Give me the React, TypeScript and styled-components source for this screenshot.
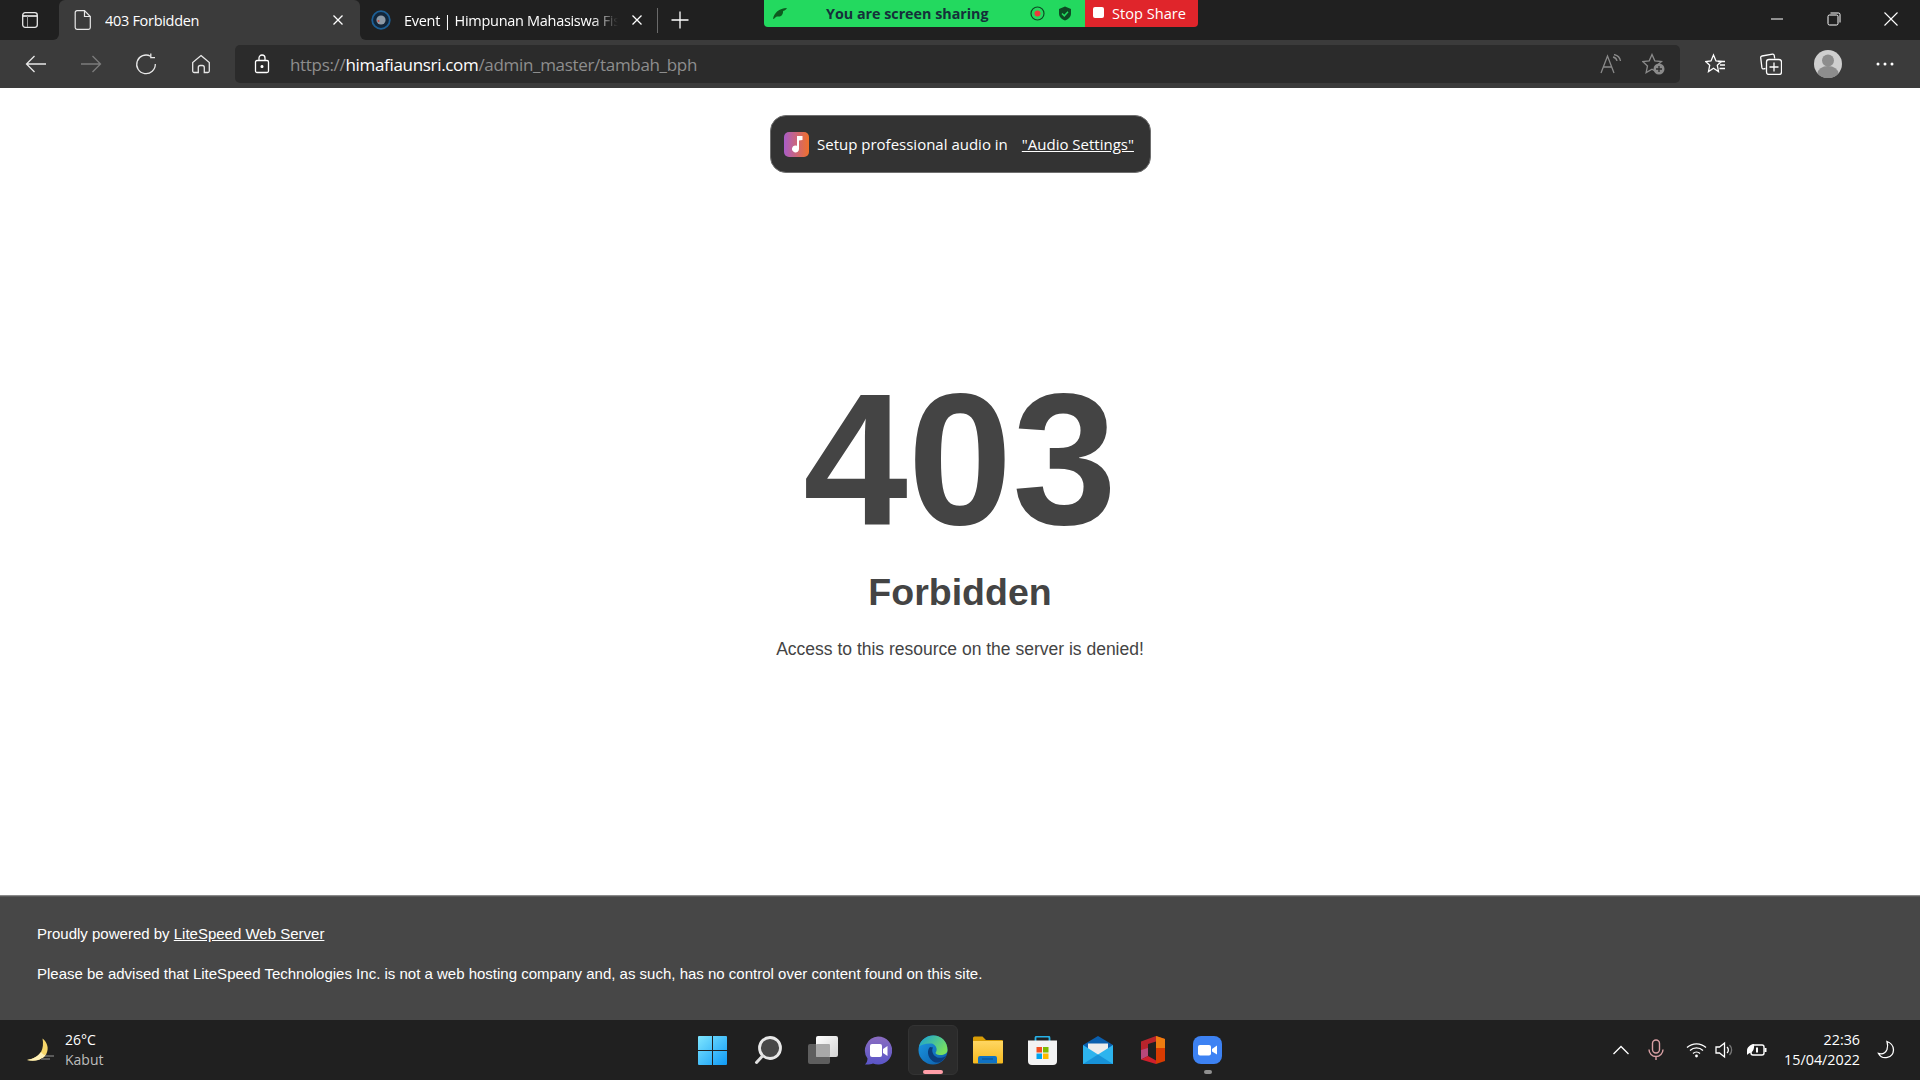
import styled, { createGlobalStyle } from "styled-components"

const uiFont = `"Open Sans", "Noto Sans", sans-serif`
const pageFont = `"Liberation Sans", Arial, sans-serif`

const Global = createGlobalStyle`
  html, body { margin: 0; padding: 0; background: #fff; }
  * { box-sizing: border-box; }
`

const Screen = styled.div`
  width: 1920px;
  height: 1080px;
  position: relative;
  overflow: hidden;
  display: flex;
  flex-direction: column;
  font-family: ${uiFont};
`

const TabStrip = styled.div`
  height: 40px;
  background: linear-gradient(#202020 50%, #3b3b3b 50%);
  display: flex;
  align-items: stretch;
  flex: none;
`

const SidebarButton = styled.div`
  width: 59px;
  background: #202020;
  border-radius: 0 0 6px 0;
  display: flex;
  align-items: center;
  justify-content: center;
`

const Tab = styled.div<{ $active?: boolean }>`
  width: ${p => (p.$active ? "301px" : "292px")};
  height: 40px;
  background: ${p => (p.$active ? "#3b3b3b" : "#202020")};
  border-radius: ${p => (p.$active ? "6px 6px 0 0" : "0 0 0 6px")};
  display: flex;
  align-items: center;
  padding: 0 ${p => (p.$active ? "16px 0 15px" : "9px 0 11px")};
  gap: 13px;
  color: #fff;
  flex: none;
`

const TabTitle = styled.span<{ $fade?: boolean }>`
  flex: 1;
  font-size: 14.5px;
  letter-spacing: -0.3px;
  white-space: nowrap;
  overflow: hidden;
  ${p => p.$fade && `
    -webkit-mask-image: linear-gradient(to right, #000 88%, transparent);
    mask-image: linear-gradient(to right, #000 88%, transparent);
  `}
`

const StripRest = styled.div`
  flex: 1;
  background: #202020;
  display: flex;
  align-items: stretch;
`

const TabDivider = styled.div`
  width: 1px;
  height: 25px;
  background: #6a6a6a;
  align-self: center;
  margin-left: 5px;
  margin-top: 1px;
`

const NewTab = styled.div`
  width: 43px;
  display: flex;
  align-items: center;
  justify-content: center;
`

const WindowControls = styled.div`
  margin-left: auto;
  display: flex;
  padding-right: 1px;
`

const WindowButton = styled.div`
  width: 57px;
  display: flex;
  align-items: center;
  justify-content: center;
  padding-bottom: 2px;
`

const Toolbar = styled.div`
  height: 48px;
  flex: none;
  background: #3b3b3b;
  display: flex;
  align-items: center;
  padding: 0 0 0 8px;
`

const NavButton = styled.div`
  width: 55px;
  display: flex;
  align-items: center;
  justify-content: center;
`

const AddressBar = styled.div`
  width: 1445px;
  height: 38px;
  margin: 0 8px 0 7px;
  background: #2b2b2b;
  border-radius: 5px;
  display: flex;
  align-items: center;
  padding: 0 14px 0 19px;
  flex: none;
`

const Url = styled.div`
  margin-left: 20px;
  font-size: 17px;
  letter-spacing: -0.32px;
  color: #8e8e8e;
  flex: 1;
  white-space: nowrap;
`

const Host = styled.span`
  color: #fff;
`

const AddressIcons = styled.div`
  display: flex;
  align-items: center;
  gap: 20px;
`

const ToolButton = styled.div<{ $w: number }>`
  width: ${p => p.$w}px;
  display: flex;
  align-items: center;
  justify-content: center;
`

const Content = styled.main`
  flex: 1;
  background: #fff;
  color: #444;
  font-family: ${pageFont};
  text-align: center;
  padding-top: 277px;
  border-bottom: 1px solid #8a8a8a;
`

const Code = styled.div`
  font-size: 188px;
  line-height: 188px;
  font-weight: 700;
  margin-bottom: 17px;
`

const Title = styled.h1`
  font-size: 37.5px;
  line-height: 44px;
  font-weight: 700;
  margin: 0;
`

const Description = styled.p`
  font-size: 17.5px;
  line-height: 22px;
  margin: 24px 0 0;
`

const Footer = styled.footer`
  height: 124px;
  flex: none;
  background: #474747;
  color: #fff;
  font-family: ${pageFont};
  font-size: 15px;
  padding: 28px 37px 0;
  border-top: 1px solid #5a5a5a;
`

const FooterLine = styled.p`
  margin: 0 0 23px;
  line-height: 17px;
`

const FooterLink = styled.a`
  color: #fff;
  text-decoration: underline;
`

const Taskbar = styled.div`
  height: 60px;
  flex: none;
  background: #202020;
  display: flex;
  align-items: center;
  color: #fff;
`

const Weather = styled.div`
  width: 685px;
  display: flex;
  align-items: center;
  padding-left: 26px;
  gap: 10px;
  flex: none;
`

const WeatherText = styled.div`
  font-size: 14px;
  line-height: 20px;
`

const WeatherState = styled.div`
  color: #bdbdbd;
`

const TaskApps = styled.div`
  display: flex;
  align-items: center;
`

const TaskApp = styled.div<{ $active?: boolean }>`
  width: 55px;
  height: 50px;
  position: relative;
  display: flex;
  align-items: center;
  justify-content: center;
  &::before {
    content: "";
    display: ${p => (p.$active ? "block" : "none")};
    position: absolute;
    inset: 0 2.5px;
    background: #2b2b2b;
    border: 1px solid #333;
    border-radius: 6px;
  }
  & > svg {
    position: relative;
  }
`

const RunDot = styled.span<{ $active?: boolean }>`
  position: absolute;
  bottom: 1px;
  left: 50%;
  transform: translateX(-50%);
  height: 4px;
  border-radius: 2px;
  width: ${p => (p.$active ? "20px" : "8px")};
  background: ${p => (p.$active ? "#ff9ea8" : "#8f8f8f")};
`

const Tray = styled.div`
  margin-left: auto;
  display: flex;
  align-items: center;
  padding-right: 22px;
`

const TraySlot = styled.div<{ $w: number }>`
  width: ${p => p.$w}px;
  display: flex;
  align-items: center;
  justify-content: center;
`

const Clock = styled.div`
  width: 84px;
  text-align: right;
  font-size: 14.3px;
  line-height: 20px;
  margin-right: 14px;
  white-space: nowrap;
`

const ShareBar = styled.div`
  position: absolute;
  top: 0;
  left: 764px;
  width: 434px;
  height: 27px;
  border-radius: 0 0 4px 4px;
  overflow: hidden;
  display: flex;
`

const ShareStatus = styled.div`
  width: 321px;
  background: #23d95f;
  display: flex;
  align-items: center;
  padding-left: 8px;
`

const ShareLabel = styled.span`
  margin-left: 38px;
  font-size: 14.3px;
  font-weight: 700;
  color: #15303a;
  white-space: nowrap;
  flex: 1;
`

const ShareIcons = styled.div`
  display: flex;
  align-items: center;
  gap: 13px;
  padding-right: 13px;
`

const StopButton = styled.div`
  flex: 1;
  background: #e0252b;
  color: #fff;
  font-size: 14.6px;
  display: flex;
  align-items: center;
  gap: 8px;
  padding-left: 8px;
  padding-bottom: 2px;
`

const StopSquare = styled.span`
  width: 11px;
  height: 11px;
  background: #fff;
  border-radius: 2px;
`

const AudioToast = styled.div`
  position: absolute;
  top: 115px;
  left: 770px;
  width: 381px;
  height: 58px;
  background: #333;
  border: 1px solid #6f6f6f;
  border-radius: 16px;
  color: #fff;
  display: flex;
  align-items: center;
  padding-left: 13px;
  font-size: 15px;
`

const AudioBadge = styled.div`
  width: 25px;
  height: 25px;
  border-radius: 5px;
  background: linear-gradient(90deg, #a85cc8, #f0702a);
  display: flex;
  align-items: center;
  justify-content: center;
  margin-right: 8px;
  flex: none;
`

const AudioLink = styled.a`
  color: #fff;
  text-decoration: underline;
  margin-left: 14px;
  white-space: nowrap;
`

const AudioText = styled.span`
  white-space: nowrap;
`

const line = { fill: "none", stroke: "#fff", strokeWidth: 1.3 }
const dim = { fill: "none", stroke: "#8a8a8a", strokeWidth: 1.3 }

const App = () => {
  return (
    <Screen>
      <Global />
      <TabStrip>
        <SidebarButton>
          <svg width="18" height="18" viewBox="0 0 18 18">
            <rect x="1.7" y="1.7" width="14.600" height="14.600" rx="2.500" fill="none" stroke="#e8e8e8" strokeWidth="1.300" />
            <path d="M2 5h14" stroke="#fff" strokeWidth="1.500" />
            <path d="M6.500 5v11" stroke="#9a9a9a" strokeWidth="1" />
          </svg>
        </SidebarButton>
        <Tab $active>
          <svg width="18" height="20" viewBox="0 0 18 20" fill="none" stroke="#e8e8e8" strokeWidth="1.200">
            <path d="M3 .7h7.500L16.300 6.500V17.500a1.800 1.800 0 0 1-1.800 1.800H3a1.800 1.800 0 0 1-1.800-1.800V2.500A1.800 1.800 0 0 1 3 .7z" />
            <path d="M10.500 .7V6.500h5.800" />
          </svg>
          <TabTitle>403 Forbidden</TabTitle>
          <svg width="12" height="12" viewBox="0 0 12 12" {...line}>
            <path d="M1.500 1.500l9 9M10.500 1.500l-9 9" />
          </svg>
        </Tab>
        <Tab>
          <svg width="20" height="20" viewBox="0 0 20 20">
            <circle cx="10" cy="10" r="8.800" fill="#12263a" stroke="#1d5f95" strokeWidth="1.800" />
            <circle cx="10" cy="10" r="4.600" fill="#8d9aa6" />
            <circle cx="7.500" cy="11" r="1" fill="#c64a3f" />
          </svg>
          <TabTitle $fade>Event | Himpunan Mahasiswa Fisika</TabTitle>
          <svg width="12" height="12" viewBox="0 0 12 12" {...line}>
            <path d="M1.500 1.500l9 9M10.500 1.500l-9 9" />
          </svg>
        </Tab>
        <StripRest>
          <TabDivider />
          <NewTab>
            <svg width="18" height="18" viewBox="0 0 18 18" {...line}>
              <path d="M9 .5v17M.5 9h17" />
            </svg>
          </NewTab>
          <WindowControls>
            <WindowButton>
              <svg width="14" height="14" viewBox="0 0 14 14" {...line} strokeWidth={1}>
                <path d="M1 7h12" />
              </svg>
            </WindowButton>
            <WindowButton>
              <svg width="14" height="14" viewBox="0 0 14 14" {...line} strokeWidth={1}>
                <rect x="1" y="3" width="10" height="10" rx="1.500" />
                <path d="M3.500 1H11.500a1.500 1.500 0 0 1 1.500 1.500V10.500" />
              </svg>
            </WindowButton>
            <WindowButton>
              <svg width="14" height="14" viewBox="0 0 14 14" {...line} strokeWidth={1.100}>
                <path d="M.5 .5l13 13M13.500 .5l-13 13" />
              </svg>
            </WindowButton>
          </WindowControls>
        </StripRest>
      </TabStrip>

      <Toolbar>
        <NavButton>
          <svg width="22" height="20" viewBox="0 0 22 20" fill="none" stroke="#e8e8e8" strokeWidth="1.300">
            <path d="M21 10H1.500M9.500 2l-8 8 8 8" />
          </svg>
        </NavButton>
        <NavButton>
          <svg width="22" height="20" viewBox="0 0 22 20" fill="none" stroke="#7c7c7c" strokeWidth="1.300">
            <path d="M1 10h19.500M12.500 2l8 8-8 8" />
          </svg>
        </NavButton>
        <NavButton>
          <svg width="22" height="22" viewBox="0 0 22 22" fill="none" stroke="#e8e8e8" strokeWidth="1.300">
            <path d="M15.500 3.200A9.300 9.300 0 1 0 20.300 11" />
            <path d="M15.800 .5v4.200h4.200" />
          </svg>
        </NavButton>
        <NavButton>
          <svg width="20" height="20" viewBox="0 0 20 20" fill="none" stroke="#e8e8e8" strokeWidth="1.300">
            <path d="M10 1.500l8.300 7V17a1.500 1.500 0 0 1-1.500 1.500h-3.500v-5a2 2 0 0 0-2-2H9.300a2 2 0 0 0-2 2v5H3.200A1.500 1.500 0 0 1 1.700 17V8.500z" />
          </svg>
        </NavButton>
        <AddressBar>
          <svg width="16" height="20" viewBox="0 0 16 20" {...line}>
            <rect x="1.500" y="6.500" width="13" height="12" rx="1.500" />
            <path d="M5 6.500V4a3 3 0 0 1 6 0v2.500" />
            <circle cx="8" cy="12.500" r="0.900" fill="#fff" />
          </svg>
          <Url>
            https://<Host>himafiaunsri.com</Host>/admin_master/tambah_bph
          </Url>
          <AddressIcons>
            <svg width="22" height="20" viewBox="0 0 22 20" {...dim}>
              <path d="M1 19L7.500 2 14 19M3.500 13h8" />
              <path d="M13 3a5 5 0 0 1 4 4M14 .5a8 8 0 0 1 6.500 6.500" />
            </svg>
            <svg width="24" height="22" viewBox="0 0 24 22">
              <path d="M10 1.500l2.800 6.300 6.700.7-5 4.500 1.400 6.600-5.900-3.400L4.100 19.600 5.500 13 .7 8.500l6.500-.7z" {...dim} />
              <circle cx="17" cy="16" r="5.500" fill="#8a8a8a" />
              <path d="M17 13v6M14 16h6" stroke="#2b2b2b" strokeWidth="1.300" />
            </svg>
          </AddressIcons>
        </AddressBar>
        <ToolButton $w={55}>
          <svg width="22" height="22" viewBox="0 0 22 22" {...line}>
            <path d="M8.500 2l2.500 6 5.500.5-4.200 3.800 1.200 6.200-5-3.300-5 3.300 1.200-6.200L.8 8.500 6 8z" />
            <path d="M13 8.500h7M15 12h5M14.500 15.500h5.500" />
          </svg>
        </ToolButton>
        <ToolButton $w={55}>
          <svg width="22" height="22" viewBox="0 0 22 22" {...line}>
            <path d="M5.500 15.500l-1.800.4a1.500 1.500 0 0 1-1.800-1.200L.7 4.700A1.500 1.500 0 0 1 2 3L12.500 1.200a1.500 1.500 0 0 1 1.700 1.200l.5 3.100" />
            <rect x="6.500" y="6.500" width="15" height="15" rx="2.500" />
            <path d="M14 9.500v9M9.500 14h9" />
          </svg>
        </ToolButton>
        <ToolButton $w={59}>
          <svg width="28" height="28" viewBox="0 0 28 28">
            <circle cx="14" cy="14" r="14" fill="#cfcfcf" />
            <circle cx="14" cy="10.500" r="6" fill="#8d8d8d" />
            <path d="M3.500 23.500a10.500 7.500 0 0 1 21 0A14 14 0 0 1 3.500 23.500z" fill="#8d8d8d" />
          </svg>
        </ToolButton>
        <ToolButton $w={56}>
          <svg width="18" height="4" viewBox="0 0 18 4" fill="#fff">
            <circle cx="2" cy="2" r="1.500" />
            <circle cx="9" cy="2" r="1.500" />
            <circle cx="16" cy="2" r="1.500" />
          </svg>
        </ToolButton>
      </Toolbar>

      <Content>
        <Code>403</Code>
        <Title>Forbidden</Title>
        <Description>Access to this resource on the server is denied!</Description>
      </Content>

      <Footer>
        <FooterLine>
          Proudly powered by <FooterLink href="#">LiteSpeed Web Server</FooterLink>
        </FooterLine>
        <FooterLine>
          Please be advised that LiteSpeed Technologies Inc. is not a web hosting company and, as such, has no control over content found on this site.
        </FooterLine>
      </Footer>

      <Taskbar>
        <Weather>
          <svg width="29" height="25" viewBox="0 0 29 25">
            <path d="M16.500 .5c5 4 6.500 10 4 15-2.500 5-9 8.500-19.500 6.500 6-1 11-3.500 14-8 2-3.500 2.500-9 1.500-13.500z" fill="#f6d66a" />
            <path d="M1 22c6-1 11-3.500 14-8 2 2.500 3.500 4 5.500 2-3 5-10 8-19.500 6z" fill="#fff1b8" />
            <path d="M19 18h9M15 21h9" stroke="#6d6d6d" strokeWidth="1.500" />
          </svg>
          <WeatherText>
            26°C
            <WeatherState>Kabut</WeatherState>
          </WeatherText>
        </Weather>
        <TaskApps>
          <TaskApp>
            <svg width="29" height="29" viewBox="0 0 29 29">
              <defs>
                <linearGradient id="win" x1="0" y1="0" x2="1" y2="1">
                  <stop offset="0" stopColor="#7fe6ff" />
                  <stop offset="1" stopColor="#0f9af5" />
                </linearGradient>
              </defs>
              <path d="M0 1a1 1 0 0 1 1-1h13v14H0zM15 0h13a1 1 0 0 1 1 1v13H15zM0 15h14v14H1a1 1 0 0 1-1-1zM15 15h14v13a1 1 0 0 1-1 1H15z" fill="url(#win)" />
            </svg>
          </TaskApp>
          <TaskApp>
            <svg width="28" height="29" viewBox="0 0 28 29">
              <circle cx="16" cy="12" r="10.500" fill="#484848" stroke="#e8e8e8" strokeWidth="2.800" />
              <path d="M8.500 20L2.500 26.500" stroke="#e0e0e0" strokeWidth="3" strokeLinecap="round" />
            </svg>
          </TaskApp>
          <TaskApp>
            <svg width="30" height="28" viewBox="0 0 30 28">
              <defs>
                <linearGradient id="taskFront" x1="0" y1="0" x2="1" y2="1">
                  <stop offset="0" stopColor="#ffffff" />
                  <stop offset="1" stopColor="#d4d4d4" />
                </linearGradient>
              </defs>
              <rect x="0" y="8" width="22" height="20" rx="2" fill="#5e5e5e" />
              <rect x="8" y="0" width="22" height="21" rx="2" fill="url(#taskFront)" />
              <rect x="8" y="8" width="14" height="13" rx="1" fill="#a8a8a8" />
            </svg>
          </TaskApp>
          <TaskApp>
            <svg width="29" height="29" viewBox="0 0 29 29">
              <defs>
                <linearGradient id="chat" x1="0" y1="0" x2="0" y2="1">
                  <stop offset="0" stopColor="#8a6cc0" />
                  <stop offset="1" stopColor="#5a55c8" />
                </linearGradient>
              </defs>
              <path d="M15 .5a14 14 0 1 1-5 27c-2 .8-5 1.300-8 1 1.500-1.500 2.500-3.500 2.500-6A14 14 0 0 1 15 .5z" fill="url(#chat)" />
              <rect x="7" y="8" width="12" height="13" rx="2" fill="#fff" />
              <path d="M20 13l4.500-3v10L20 17z" fill="#fff" />
            </svg>
          </TaskApp>
          <TaskApp $active>
            <svg width="30" height="30" viewBox="0 0 30 30">
              <defs>
                <linearGradient id="edgeA" x1="0" y1="0" x2="1" y2="1">
                  <stop offset="0" stopColor="#1c9be6" />
                  <stop offset="1" stopColor="#0c5aa6" />
                </linearGradient>
                <linearGradient id="edgeB" x1="0" y1="0" x2="1" y2="0.600">
                  <stop offset="0" stopColor="#159fd8" />
                  <stop offset="1" stopColor="#78e05f" />
                </linearGradient>
              </defs>
              <circle cx="15" cy="15" r="14.500" fill="url(#edgeA)" />
              <path d="M1 11.500C3 4.500 9 .5 15.500 .5 24 .5 29.500 7 29.500 15c0 3.500-3 5-7 5-3.500 0-6-1.500-4.500-3 1.500-2 .5-7-4-8.500C8 8 3 9.500 1 11.500z" fill="url(#edgeB)" />
              <path d="M12 12c-3 2.500-3 10 2.500 14 4.500 3 9.500 2 14-5.500-3 2.500-8.500 3.500-11.500.5-2.500-2-3.500-6-2-8.500z" fill="#0a3d7c" />
            </svg>
            <RunDot $active />
          </TaskApp>
          <TaskApp>
            <svg width="30" height="28" viewBox="0 0 30 28">
              <defs>
                <linearGradient id="folder" x1="0" y1="0" x2="0" y2="1">
                  <stop offset="0" stopColor="#ffd662" />
                  <stop offset="1" stopColor="#f6b91e" />
                </linearGradient>
              </defs>
              <path d="M0 2a1.500 1.500 0 0 1 1.500-1.500h8L13 4h16a1 1 0 0 1 1 1v4H0z" fill="#d99d06" />
              <path d="M0 5h30v21.500a1 1 0 0 1-1 1H1a1 1 0 0 1-1-1z" fill="url(#folder)" />
              <path d="M5 27.500V22a2 2 0 0 1 2-2h15a2 2 0 0 1 2 2v5.500z" fill="#0f72c4" />
              <rect x="9" y="22.500" width="11" height="1" fill="#0a4d8c" />
            </svg>
          </TaskApp>
          <TaskApp>
            <svg width="29" height="29" viewBox="0 0 29 29">
              <path d="M7.500 6V2a1.500 1.500 0 0 1 1.500-1.500h11a1.500 1.500 0 0 1 1.500 1.500V6" fill="none" stroke="#27b2e8" strokeWidth="1.800" />
              <path d="M0 4.500h29V25a4 4 0 0 1-4 4H4a4 4 0 0 1-4-4z" fill="#f3f3f3" />
              <rect x="8.500" y="11" width="5.500" height="5.500" fill="#f25022" />
              <rect x="15" y="11" width="5.500" height="5.500" fill="#7fba00" />
              <rect x="8.500" y="17.500" width="5.500" height="5.500" fill="#00a4ef" />
              <rect x="15" y="17.500" width="5.500" height="5.500" fill="#ffb900" />
            </svg>
          </TaskApp>
          <TaskApp>
            <svg width="30" height="28" viewBox="0 0 30 28">
              <path d="M15 0l15 9v3H0V9z" fill="#0a5fae" />
              <path d="M5 7.500h20v7l-10 5-10-5z" fill="#ececec" />
              <path d="M0 9l15 9.500L30 9v19H0z" fill="#2db4ee" />
              <path d="M0 28l15-9.500L30 28z" fill="#1792d8" />
            </svg>
          </TaskApp>
          <TaskApp>
            <svg width="24" height="28" viewBox="0 0 24 28">
              <path d="M0 5.500L15 0v5.500L7 8v12l-7 3.500z" fill="#b8242c" />
              <path d="M0 14l7-2v8l-7 3.500z" fill="#b8487a" />
              <path d="M0 23.500L15 28v-3.500L7 20z" fill="#d11f2c" />
              <path d="M15 0l9 3v22l-9 3z" fill="#d83b01" />
              <path d="M15 0l9 3v9H15z" fill="#ee7c10" />
            </svg>
          </TaskApp>
          <TaskApp>
            <svg width="29" height="28" viewBox="0 0 29 28">
              <rect width="29" height="28" rx="8" fill="#3d82f3" />
              <rect x="5" y="9" width="13" height="10.500" rx="2" fill="#fff" />
              <path d="M19 13l5-3.500v9L19 15.500z" fill="#fff" />
            </svg>
            <RunDot />
          </TaskApp>
        </TaskApps>
        <Tray>
          <TraySlot $w={26}>
            <svg width="18" height="10" viewBox="0 0 18 10" {...line}>
              <path d="M1.500 9L9 1.500 16.500 9" />
            </svg>
          </TraySlot>
          <TraySlot $w={44}>
            <svg width="16" height="22" viewBox="0 0 16 22" fill="none" stroke="#d9a0a4" strokeWidth="1.400">
              <rect x="4.500" y="1" width="7" height="13" rx="3.500" />
              <path d="M1 10.500a7 7 0 0 0 14 0M8 17.500V21" />
            </svg>
          </TraySlot>
          <TraySlot $w={36}>
            <svg width="21" height="16" viewBox="0 0 21 16" {...line}>
              <path d="M1 5.500a14 14 0 0 1 19 0M4 8.500a9.500 9.500 0 0 1 13 0M7 11.500a5 5 0 0 1 7 0" />
              <circle cx="10.500" cy="14" r="1.400" fill="#fff" stroke="none" />
            </svg>
          </TraySlot>
          <TraySlot $w={22}>
            <svg width="20" height="18" viewBox="0 0 20 18" {...line}>
              <path d="M1 6v6h3.500L9.500 16V2L4.500 6z" />
              <path d="M12 6a4 4 0 0 1 0 6" />
              <path d="M14.500 4a7 7 0 0 1 0 10" stroke="#777" />
            </svg>
          </TraySlot>
          <TraySlot $w={40}>
            <svg width="21" height="14" viewBox="0 0 21 14">
              <rect x="5" y="2" width="13" height="10" rx="2" fill="none" stroke="#fff" strokeWidth="1.400" />
              <rect x="18.500" y="5" width="2" height="4" fill="#fff" />
              <path d="M1 8c0-4 3-6 7-7 .5 4-.5 8-4 9-1 0-2 1-3 2z" fill="#fff" />
              <rect x="10" y="4.500" width="2" height="5" fill="#fff" />
            </svg>
          </TraySlot>
          <Clock>
            22:36
            <br />
            15/04/2022
          </Clock>
          <TraySlot $w={24}>
            <svg width="20" height="20" viewBox="0 0 20 20" {...line}>
              <path d="M11 1.500c3 1 6.500 4 6.500 8.500a8 8 0 0 1-15 3.500c4 1 7-.5 8.500-4 .8-2.500.8-5.500 0-8z" />
            </svg>
          </TraySlot>
        </Tray>
      </Taskbar>

      <ShareBar>
        <ShareStatus>
          <svg width="16" height="14" viewBox="0 0 16 14">
            <path d="M1 12C2 6 7 1 15 1c-1 2-3 3-4 3 .5 1-.5 4-2 5-1.500 1-4 0-5 1-1 .5-1.500 2-3 2z" fill="#0d5a1f" />
          </svg>
          <ShareLabel>You are screen sharing</ShareLabel>
          <ShareIcons>
            <svg width="15" height="15" viewBox="0 0 15 15">
              <circle cx="7.500" cy="7.500" r="6.500" fill="none" stroke="#0e4a24" strokeWidth="1.200" />
              <circle cx="7.500" cy="7.500" r="3" fill="#ee3b3b" />
            </svg>
            <svg width="14" height="15" viewBox="0 0 14 15">
              <path d="M7 .5l6 2.500v4.500c0 3.500-3 6-6 7-3-1-6-3.500-6-7V3z" fill="#0e4a24" />
              <path d="M4 7.500l2.300 2.300L10 5.800" fill="none" stroke="#23d95f" strokeWidth="1.500" />
            </svg>
          </ShareIcons>
        </ShareStatus>
        <StopButton>
          <StopSquare />
          Stop Share
        </StopButton>
      </ShareBar>

      <AudioToast>
        <AudioBadge>
          <svg width="14" height="18" viewBox="0 0 14 18" fill="#fff">
            <path d="M7 1h5.500v4L9 5.500V14a3.500 3.500 0 1 1-2-3.200z" />
          </svg>
        </AudioBadge>
        <AudioText>Setup professional audio in</AudioText>
        <AudioLink href="#">"Audio Settings"</AudioLink>
      </AudioToast>
    </Screen>
  )
}

export default App
